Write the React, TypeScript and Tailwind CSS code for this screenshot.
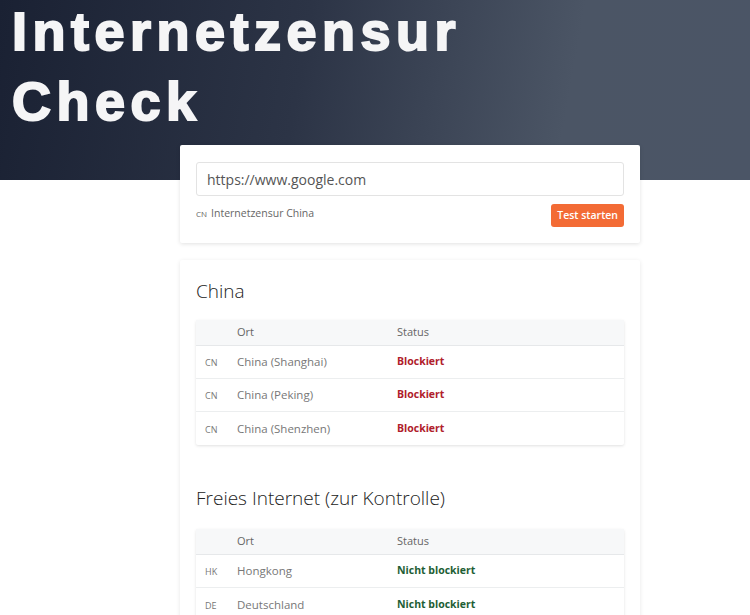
import React from "react";

type Row = { code: string; ort: string; status: string; blocked: boolean };

const china: Row[] = [
  { code: "CN", ort: "China (Shanghai)", status: "Blockiert", blocked: true },
  { code: "CN", ort: "China (Peking)", status: "Blockiert", blocked: true },
  { code: "CN", ort: "China (Shenzhen)", status: "Blockiert", blocked: true },
];

const free: Row[] = [
  { code: "HK", ort: "Hongkong", status: "Nicht blockiert", blocked: false },
  { code: "DE", ort: "Deutschland", status: "Nicht blockiert", blocked: false },
];

function Table({ rows }: { rows: Row[] }) {
  return (
    <div className="shadow-[0_1px_3px_rgba(0,0,0,0.12)] rounded-[2px] bg-white">
      <div className="grid grid-cols-[41px_160px_1fr] h-[26px] items-center bg-[#f7f8f9] border-b border-[#e6e8ea] text-[11px] text-[#666]">
        <div />
        <div>Ort</div>
        <div>Status</div>
      </div>
      {rows.map((r, i) => (
        <div
          key={i}
          className={
            "grid grid-cols-[41px_160px_1fr] h-[33px] items-center " +
            (i < rows.length - 1 ? "border-b border-[#eceeef]" : "")
          }
        >
          <div className="pl-[9px] text-[9px] text-[#777] pt-[2px]">{r.code}</div>
          <div className="text-[11.5px] text-[#777]">{r.ort}</div>
          <div
            className={
              "text-[10.5px] font-bold " +
              (r.blocked ? "text-[#b0202b]" : "text-[#1e5e35]")
            }
          >
            {r.status}
          </div>
        </div>
      ))}
    </div>
  );
}

export default function App() {
  return (
    <div
      className="min-h-[615px] bg-white overflow-hidden"
      style={{ fontFamily: '"Open Sans", "Noto Sans", sans-serif' }}
    >
      <header className="h-[180px] flex flex-col bg-[linear-gradient(100deg,#1a2133_0%,#2c3446_40%,#4b5565_75%,#4b5566_100%)] pl-[12px]">
        <h1
          className="text-[54px] leading-[70px] font-black text-[#f5f5f6] tracking-[5.5px] -mt-[4px] [-webkit-text-stroke:2px_#f5f5f6]"
          style={{ fontFamily: '"Liberation Sans", Arial, sans-serif' }}
        >
          Internetzensur
          <br />
          Check
        </h1>
      </header>

      <main className="ml-[180px] w-[460px] -mt-[35px] flex flex-col gap-[17px]">
        <section className="bg-white rounded-[2px] shadow-[0_1px_4px_rgba(0,0,0,0.12)] px-4 pt-[17px] pb-4">
          <div className="h-[34px] border border-[#e3e3e3] rounded-[3px] flex items-center px-[10px] text-[14px] text-[#555]">
            https://www.google.com
          </div>
          <div className="mt-2 flex items-center justify-between">
            <div className="flex items-center gap-[4px] text-[#666] -mt-[3px]">
              <span className="text-[8px] text-[#666]">CN</span>
              <span className="text-[10.5px]">Internetzensur China</span>
            </div>
            <button className="h-[23px] px-[6px] rounded-[3px] bg-[#f36b35] text-white text-[10.5px] font-semibold">
              Test starten
            </button>
          </div>
        </section>

        <section className="bg-white rounded-[2px] shadow-[0_1px_4px_rgba(0,0,0,0.10)] px-4 pt-4 pb-6">
          <h2 className="text-[19px] leading-[30px] font-light text-[#222] mb-[14px]">China</h2>
          <Table rows={china} />
          <h2 className="text-[19px] leading-[30px] font-light text-[#222] mt-[38px] mb-[16px]">
            Freies Internet (zur Kontrolle)
          </h2>
          <Table rows={free} />
        </section>
      </main>
    </div>
  );
}
